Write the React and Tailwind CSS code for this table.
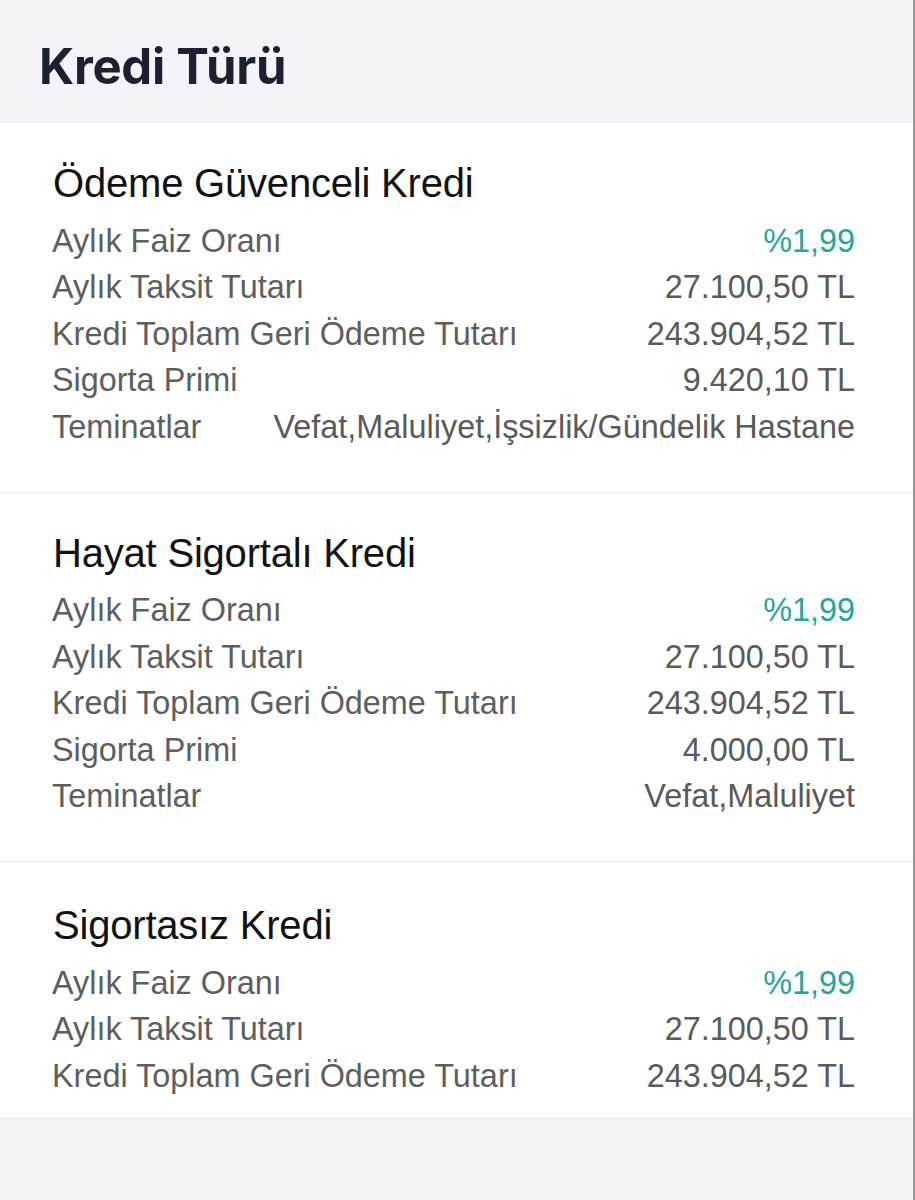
const SECTIONS = [
  {
    title: "Ödeme Güvenceli Kredi",
    rows: [
      ["Aylık Faiz Oranı", "%1,99", true],
      ["Aylık Taksit Tutarı", "27.100,50 TL"],
      ["Kredi Toplam Geri Ödeme Tutarı", "243.904,52 TL"],
      ["Sigorta Primi", "9.420,10 TL"],
      ["Teminatlar", "Vefat,Maluliyet,İşsizlik/Gündelik Hastane"],
    ],
  },
  {
    title: "Hayat Sigortalı Kredi",
    rows: [
      ["Aylık Faiz Oranı", "%1,99", true],
      ["Aylık Taksit Tutarı", "27.100,50 TL"],
      ["Kredi Toplam Geri Ödeme Tutarı", "243.904,52 TL"],
      ["Sigorta Primi", "4.000,00 TL"],
      ["Teminatlar", "Vefat,Maluliyet"],
    ],
  },
  {
    title: "Sigortasız Kredi",
    rows: [
      ["Aylık Faiz Oranı", "%1,99", true],
      ["Aylık Taksit Tutarı", "27.100,50 TL"],
      ["Kredi Toplam Geri Ödeme Tutarı", "243.904,52 TL"],
    ],
  },
];

const Section = ({ section, last }) => (
  <div
    className={
      last
        ? "pl-[54px] pr-[58px] pt-[38px] pb-[18px]"
        : "pl-[54px] pr-[58px] pt-[35px] pb-[41px] border-b border-[#ececec]"
    }
  >
    <h2 className="h-[50px] flex items-center text-[40px] text-[#111] -ml-[1px] tracking-[-0.2px]">
      {section.title}
    </h2>
    <div className="mt-[10px]">
      {section.rows.map(([label, value, accent]) => (
        <div
          key={label}
          className="h-[46.5px] flex items-center justify-between text-[32.4px] -ml-[2px]"
        >
          <span className="text-[#5e5e5e]">{label}</span>
          <span className={accent ? "text-[#26a69a]" : "text-[#5a5a5a]"}>
            {value}
          </span>
        </div>
      ))}
    </div>
  </div>
);

export default function App() {
  return (
    <div className="min-h-[1200px] w-[915px] bg-[#f3f4f9] border-r-2 border-[#9a9a9a] font-['Liberation_Sans',Arial,sans-serif]">
      <div className="h-[123px] flex items-center pl-[39px] pt-[12px] border-b border-[#e9eaef]">
        <h1 className="text-[49px] font-bold text-[#1b2131] font-['Inter',sans-serif] tracking-[-0.3px]">
          Kredi Türü
        </h1>
      </div>
      <div className="bg-white border-b border-[#e8e9ee]">
        {SECTIONS.map((s, i) => (
          <Section key={s.title} section={s} last={i === SECTIONS.length - 1} />
        ))}
      </div>
    </div>
  );
}
